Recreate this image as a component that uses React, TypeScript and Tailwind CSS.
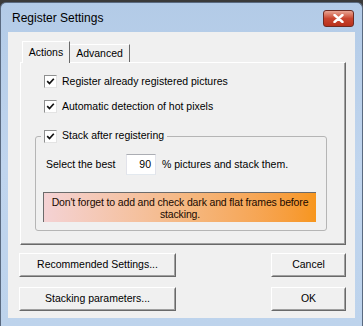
import React from "react";

const font = { fontFamily: '"Liberation Sans", Arial, sans-serif' };

const CheckBox = () => (
  <span className="flex h-[13px] w-[13px] shrink-0 items-center justify-center border border-t-[#8e8f8f] border-l-[#8e8f8f] border-r-[#e3e3e3] border-b-[#e3e3e3] bg-white">
    <svg width="9" height="9" viewBox="0 0 9 9">
      <path d="M1.2 4.2 L3.5 6.5 L7.8 1.8" fill="none" stroke="#111" strokeWidth="1.7" />
    </svg>
  </span>
);

const Button = ({ label, w }: { label: string; w: string }) => (
  <div
    className={`${w} h-[24px] border border-t-white border-l-white border-r-[#696969] border-b-[#696969] bg-[#f0f0f0]`}
  >
    <div className="flex h-full w-full items-center justify-center border border-t-[#f0f0f0] border-l-[#f0f0f0] border-r-[#a0a0a0] border-b-[#a0a0a0] text-[10.5px] text-black">
      {label}
    </div>
  </div>
);

export default function App() {
  return (
    <div className="h-[326px] w-[363px] overflow-hidden bg-[#3a3a3a]" style={font}>
      <div className="mt-[2px] flex h-[324px] w-[363px] flex-col rounded-t-[6px] border-x border-t border-[#5a6a80] bg-gradient-to-b from-[#b3cbe7] via-[#c0d5ee] to-[#bdd3ec]">
        {/* title bar */}
        <div className="flex h-[29px] shrink-0 items-center pl-[11px] pr-[8px]">
          <span className="text-[12px] text-black">Register Settings</span>
          <div className="ml-auto mt-[2px] flex h-[17px] w-[31px] items-center justify-center rounded-[3px] border border-[#6d2a22] bg-gradient-to-b from-[#e8a493] via-[#c9452f] to-[#b8301b]">
            <svg width="11" height="9" viewBox="0 0 11 9">
              <path d="M1.5 1 L9.5 8 M9.5 1 L1.5 8" stroke="#fff" strokeWidth="2.4" strokeLinecap="round" />
            </svg>
          </div>
        </div>

        {/* client area */}
        <div className="mx-[7px] flex h-[286px] flex-col bg-[#f0f0f0] pl-[12px] pt-[9px]">
          {/* tabs */}
          <div className="flex h-[21px] items-end pl-[2px]">
            <div className="z-10 mb-[-1px] flex h-[22px] w-[48px] items-center justify-center border-l border-t border-r border-l-white border-t-white border-r-[#696969] bg-[#f0f0f0] text-[10.5px] text-black">
              Actions
            </div>
            <div className="flex h-[18px] w-[60px] items-center justify-center border-t border-r border-t-white border-r-[#696969] bg-[#f0f0f0] text-[10.5px] text-black">
              Advanced
            </div>
          </div>

          {/* panel */}
          <div className="h-[183px] w-[326px] border border-t-white border-l-white border-r-[#696969] border-b-[#696969]">
            <div className="h-full w-full border-r border-b border-r-[#a0a0a0] border-b-[#a0a0a0] pt-[12px] text-[10.5px] text-black">
              <div className="ml-[23px] flex h-[13px] items-center gap-[5px]">
                <CheckBox />
                <span>Register already registered pictures</span>
              </div>
              <div className="ml-[23px] mt-[12px] flex h-[13px] items-center gap-[5px]">
                <CheckBox />
                <span>Automatic detection of hot pixels</span>
              </div>

              <fieldset className="ml-[14px] mt-[16px] h-[102px] w-[292px] rounded-[3px] border border-[#b5b5b5] pb-[9px]">
                <legend className="ml-[5px] flex h-[14px] items-center gap-[5px] bg-[#f0f0f0] px-[3px]">
                  <CheckBox />
                  <span>Stack after registering</span>
                </legend>
                <div className="mt-[11px] flex h-[21px] items-center pl-[10px]">
                  <span className="w-[80px]">Select the best</span>
                  <div className="flex h-[21px] w-[30px] items-center justify-end border border-t-[#abadb3] border-l-[#e2e3ea] border-r-[#e2e3ea] border-b-[#e3e9ef] bg-white pr-[4px]">
                    90
                  </div>
                  <span className="ml-[6px]">% pictures and stack them.</span>
                </div>
                <div className="ml-[7px] mt-[17px] flex h-[30px] w-[273px] flex-col items-center justify-center whitespace-nowrap border-l border-t border-[#6b6b6b] bg-gradient-to-r from-[#f4d2d4] via-[#f5b67c] via-55% to-[#f7961c] text-[10.5px] leading-[12px] tracking-[-0.15px] text-[#1a0a00]">
                  <span>Don't forget to add and check dark and flat frames before</span>
                  <span>stacking.</span>
                </div>
              </fieldset>
            </div>
          </div>

          {/* buttons */}
          <div className="-ml-[1px] mt-[8px] flex w-[327px] flex-col gap-[10px]">
            <div className="flex justify-between">
              <Button label="Recommended Settings..." w="w-[157px]" />
              <Button label="Cancel" w="w-[75px]" />
            </div>
            <div className="flex justify-between">
              <Button label="Stacking parameters..." w="w-[157px]" />
              <Button label="OK" w="w-[75px]" />
            </div>
          </div>
        </div>
      </div>
    </div>
  );
}
